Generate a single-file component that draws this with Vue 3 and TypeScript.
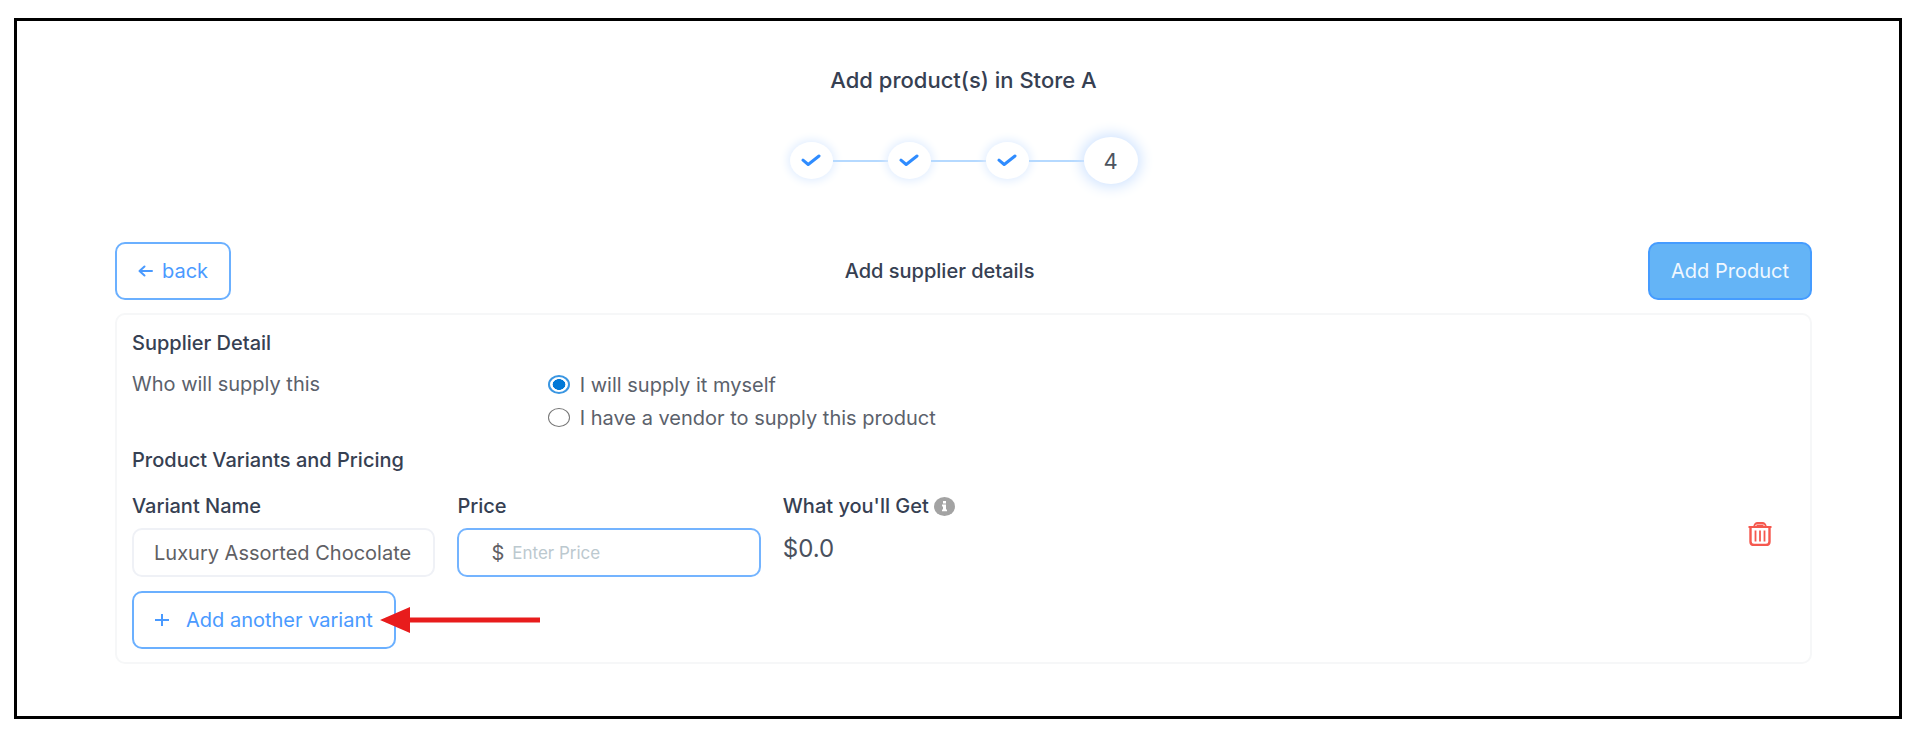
<script setup lang="ts">
import { ref } from 'vue'

interface Variant {
  id: number
  name: string
  price: string
}

const doneSteps = [1, 2, 3]
const supplier = ref<'self' | 'vendor'>('self')
const variants = ref<Variant[]>([{ id: 1, name: 'Luxury Assorted Chocolate', price: '' }])

function addVariant(): void {
  variants.value.push({ id: Date.now(), name: '', price: '' })
}

function removeVariant(id: number): void {
  variants.value = variants.value.filter((v) => v.id !== id)
}

function payout(v: Variant): string {
  const n = Number.parseFloat(v.price)
  return Number.isFinite(n) ? n.toFixed(1) : '0.0'
}
</script>

<template>
  <div class="page">
    <main class="frame">
      <h1 class="title">Add product(s) in Store A</h1>

      <ol class="stepper">
        <li v-for="s in doneSteps" :key="s" class="step">
          <span class="bubble">
            <svg width="20" height="13" viewBox="0 0 20 13" role="img" :aria-label="`Step ${s} done`">
              <path d="M2 6.2 7.2 10.5 18 2" fill="none" stroke="#2f8cff" stroke-width="3" stroke-linecap="round" stroke-linejoin="round" />
            </svg>
          </span>
          <span class="line"></span>
        </li>
        <li class="step"><span class="bubble current">4</span></li>
      </ol>

      <header class="bar">
        <button type="button" class="btn back">
          <svg width="15" height="12" viewBox="0 0 15 12" aria-hidden="true">
            <path d="M14 6H2M6.5 1.5 1.5 6l5 4.5" fill="none" stroke="currentColor" stroke-width="2" stroke-linecap="round" stroke-linejoin="round" />
          </svg>
          back
        </button>
        <h2 class="heading">Add supplier details</h2>
        <button type="button" class="btn primary">Add Product</button>
      </header>

      <section class="panel">
        <h3 class="heading">Supplier Detail</h3>
        <div class="supply" role="radiogroup" aria-labelledby="who">
          <span id="who" class="question">Who will supply this</span>
          <div class="options">
            <label class="option" for="self">
              <input id="self" v-model="supplier" type="radio" name="supplier" value="self" />
              I will supply it myself
            </label>
            <label class="option" for="vendor">
              <input id="vendor" v-model="supplier" type="radio" name="supplier" value="vendor" />
              I have a vendor to supply this product
            </label>
          </div>
        </div>

        <h3 class="heading pricing">Product Variants and Pricing</h3>
        <div v-for="v in variants" :key="v.id" class="variant">
          <div class="fields">
            <div class="field">
              <label class="heading" :for="`name-${v.id}`">Variant Name</label>
              <input :id="`name-${v.id}`" v-model="v.name" class="box name" type="text" />
            </div>
            <div class="field">
              <label class="heading" :for="`price-${v.id}`">Price</label>
              <div class="box price">
                <span>$</span>
                <input :id="`price-${v.id}`" v-model="v.price" type="text" placeholder="Enter Price" />
              </div>
            </div>
            <div class="field">
              <span class="heading get">
                What you'll Get
                <svg width="21" height="19" viewBox="0 0 21 19" aria-hidden="true">
                  <ellipse cx="10.5" cy="9.5" rx="10.5" ry="9.5" fill="#a3a3a3" />
                  <path d="M9 4h3v2.4H9zM8 7.6h4v4.8h1v1.8H8v-1.8h1V9.400H8z" fill="#fff" />
                </svg>
              </span>
              <output class="amount">${{ payout(v) }}</output>
            </div>
          </div>
          <button type="button" class="trash" aria-label="Delete variant" @click="removeVariant(v.id)">
            <svg width="24" height="24" viewBox="0 0 24 24" fill="none" stroke="#f5584e">
              <path d="M.5 5h23" stroke-width="2" />
              <path d="M6 5c.5-2.500 1.500-4 3.500-4h5c2 0 3 1.500 3.500 4M8.500 3.500h7" stroke-width="1.800" />
              <path d="M2.500 5v14.500c0 2 1.300 3.500 3.500 3.500h12c2.200 0 3.500-1.500 3.500-3.500V5" stroke-width="2.400" />
              <path d="M7.500 8.500v11M12 8.500v11M16.500 8.500v11" stroke-width="1.800" />
            </svg>
          </button>
        </div>

        <div class="add">
          <button type="button" class="btn" @click="addVariant">
            <svg class="plus" width="14" height="12" viewBox="0 0 14 12" aria-hidden="true">
              <path d="M0 6h14M7 0v12" stroke="currentColor" stroke-width="2" />
            </svg>
            Add another variant
          </button>
          <svg class="arrow" width="160" height="26" viewBox="0 0 160 26" aria-hidden="true">
            <path d="M0 13 30 0v10.500h130v5H30V26z" fill="#e81c1c" />
          </svg>
        </div>
      </section>
    </main>
  </div>
</template>

<style>
body {
  margin: 0;
  background: #fff;
}
</style>

<style scoped>
.page {
  padding: 18px 13px 22px 14px;
  font-family: Inter, "Liberation Sans", sans-serif;
  font-size: 20px;
  line-height: 24px;
  color: #5b616b;
}

.page *,
.page {
  box-sizing: border-box;
}

.frame {
  border: 3px solid #000;
  padding: 45px 87px 52px 98px;
  background: #fff;
}

.title,
.heading {
  margin: 0;
  font-weight: 500;
  color: #364052;
}

.title {
  font-size: 22px;
  line-height: 28px;
  text-align: center;
}

.heading {
  font-size: 20px;
  line-height: 24px;
}

.stepper {
  display: flex;
  justify-content: center;
  align-items: center;
  list-style: none;
  margin: 43px 0 58px;
  padding: 0;
}

.step {
  display: flex;
  align-items: center;
}

.bubble {
  display: flex;
  align-items: center;
  justify-content: center;
  width: 43px;
  height: 37px;
  border-radius: 50%;
  background: #fff;
  box-shadow: 0 0 10px 2px #e0edff;
}

.current {
  width: 54px;
  height: 47px;
  font-size: 22px;
  color: #4d545e;
  box-shadow: 0 0 14px 3px #cfe3ff;
}

.line {
  width: 55px;
  height: 2px;
  background: #b5d9ff;
}

.bar {
  display: flex;
  justify-content: space-between;
  align-items: center;
  margin-bottom: 13px;
}

.btn {
  display: flex;
  align-items: center;
  justify-content: center;
  height: 58px;
  padding: 0 21px;
  border: 2px solid #6bb0ff;
  border-radius: 10px;
  background: #fff;
  color: #4a9aff;
  font: inherit;
  white-space: nowrap;
}

.back {
  gap: 9px;
}

.primary {
  border-color: #459cff;
  background: #64b4f6;
  color: #f0f8ff;
}

.panel {
  border: 2px solid #f6f7f8;
  border-radius: 10px;
  padding: 16px 15px 13px;
}

.supply {
  display: grid;
  grid-template-columns: 1fr 3fr;
  margin-top: 13px;
}

.question {
  line-height: 33px;
}

.option {
  display: flex;
  align-items: center;
  gap: 10px;
  height: 33px;
}

.option input {
  appearance: none;
  width: 22px;
  height: 19px;
  margin: 0;
  border: 1px solid #767676;
  border-radius: 50%;
  background: #fff;
}

.option input:checked {
  border: 2px solid #3a96e2;
  background: radial-gradient(closest-side, #0078d7 68%, #fff 74%);
}

.pricing {
  margin-top: 14px;
}

.variant {
  display: flex;
  align-items: flex-start;
  margin-top: 22px;
}

.fields {
  flex: 1;
  display: grid;
  grid-template-columns: repeat(5, 1fr);
  gap: 22px;
}

.field {
  display: flex;
  flex-direction: column;
  gap: 10px;
  min-width: 0;
}

.box {
  width: 100%;
  height: 49px;
  border: 2px solid #eff1f6;
  border-radius: 10px;
  background: #fff;
  color: #606064;
  font: inherit;
}

.name {
  padding: 0 20px;
}

.price {
  display: flex;
  align-items: center;
  gap: 8px;
  padding: 0 20px 0 32px;
  border-color: #74b4ff;
}

.price input {
  flex: 1;
  min-width: 0;
  padding: 0;
  border: 0;
  outline: 0;
  background: none;
  color: inherit;
  font: inherit;
  font-size: 17px;
}

.price input::placeholder {
  color: #bcc9cf;
  opacity: 1;
}

.get {
  display: flex;
  align-items: center;
  gap: 5px;
  white-space: nowrap;
}

.amount {
  font-size: 24px;
  line-height: 42px;
  color: #4a515e;
}

.trash {
  display: flex;
  justify-content: center;
  width: 46px;
  margin: 28px 12px 0 0;
  padding: 0;
  border: 0;
  background: none;
}

.add {
  display: flex;
  align-items: center;
  margin-top: 14px;
}

.add .btn {
  gap: 17px;
}

.arrow {
  position: relative;
  margin-left: -16px;
}
</style>
